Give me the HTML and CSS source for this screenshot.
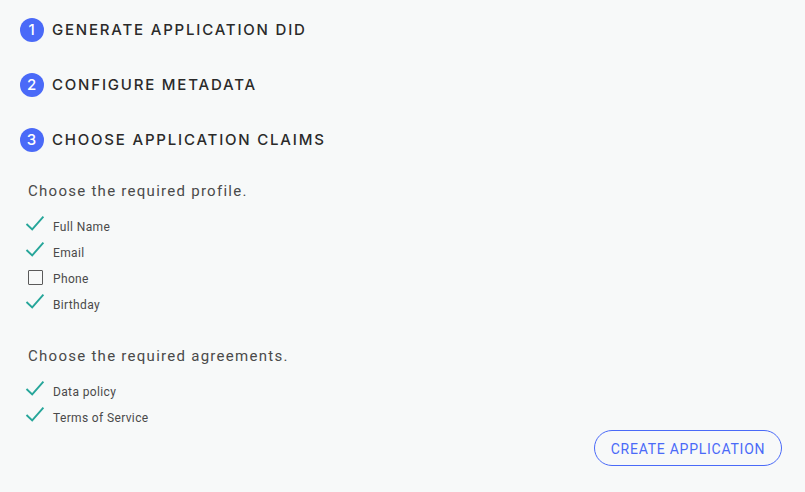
FILE: index.html
```html
<!DOCTYPE html>
<html lang="en">
<head>
<meta charset="utf-8">
<title>Create application</title>
<link rel="stylesheet" href="styles.css">
</head>
<body>
<main class="wizard">
  <h2 class="step"><span class="num">1</span><span class="label">GENERATE APPLICATION DID</span></h2>
  <h2 class="step"><span class="num">2</span><span class="label">CONFIGURE METADATA</span></h2>
  <h2 class="step"><span class="num">3</span><span class="label">CHOOSE APPLICATION CLAIMS</span></h2>
  <section class="group">
    <p class="prompt">Choose the required profile.</p>
    <ul class="claims">
      <li><svg class="mark" viewBox="0 0 20 18"><path class="check" d="M1.5 8 7.2 13.4 18.4 .6"/></svg><span>Full Name</span></li>
      <li><svg class="mark" viewBox="0 0 20 18"><path class="check" d="M1.5 8 7.2 13.4 18.4 .6"/></svg><span>Email</span></li>
      <li><svg class="mark" viewBox="0 0 20 18"><rect class="box" x="3.5" y="2.5" width="14" height="14" rx=".5"/></svg><span>Phone</span></li>
      <li><svg class="mark" viewBox="0 0 20 18"><path class="check" d="M1.5 8 7.2 13.4 18.4 .6"/></svg><span>Birthday</span></li>
    </ul>
  </section>
  <section class="group">
    <p class="prompt">Choose the required agreements.</p>
    <ul class="claims">
      <li><svg class="mark" viewBox="0 0 20 18"><path class="check" d="M1.5 8 7.2 13.4 18.4 .6"/></svg><span>Data policy</span></li>
      <li><svg class="mark" viewBox="0 0 20 18"><path class="check" d="M1.5 8 7.2 13.4 18.4 .6"/></svg><span>Terms of Service</span></li>
    </ul>
  </section>
  <button class="create" type="button">CREATE APPLICATION</button>
</main>
</body>
</html>
```
FILE: styles.css
```css
* { box-sizing: border-box; }
body { margin: 0; background: #f7f9f9; font-family: Roboto, sans-serif; color: #4a4a4a; }
.wizard { display: flex; flex-direction: column; height: 492px; padding: 18px 23px 0 20px; }
.step { display: flex; align-items: center; gap: 8px; height: 24px; margin: 0 0 31px; font-family: Inter, sans-serif; font-size: 15px; font-weight: 500; letter-spacing: 1.8px; color: #2a2a2a; white-space: nowrap; }
.label { padding-bottom: 2px; }
.num { width: 24px; height: 24px; padding-right: 1px; border-radius: 50%; background: #4a6af8; color: #fff; line-height: 24px; text-align: center; letter-spacing: 0; }
.group { margin-bottom: 27px; }
.step + .group { margin-top: -4px; }
.prompt { margin: 0 0 10px 8px; height: 24px; line-height: 24px; font-size: 15px; letter-spacing: 1.27px; }
.claims { list-style: none; margin: 0; padding: 0 0 0 5px; }
.claims li { display: flex; gap: 8px; height: 26px; line-height: 28px; font-size: 12px; letter-spacing: .36px; }
.mark { width: 20px; height: 18px; margin-top: 3px; fill: none; overflow: visible; }
.check { stroke: #26a69a; stroke-width: 1.9; }
.box { stroke: #5a5a5a; stroke-width: 1; }
.create { align-self: flex-end; flex: none; width: 188px; height: 36px; margin-top: -27px; padding: 2px 0 0; border: 1px solid #4a6af8; border-radius: 18px; background: transparent; color: #4a6af8; font: 400 14px Roboto, sans-serif; letter-spacing: .75px; }
```
